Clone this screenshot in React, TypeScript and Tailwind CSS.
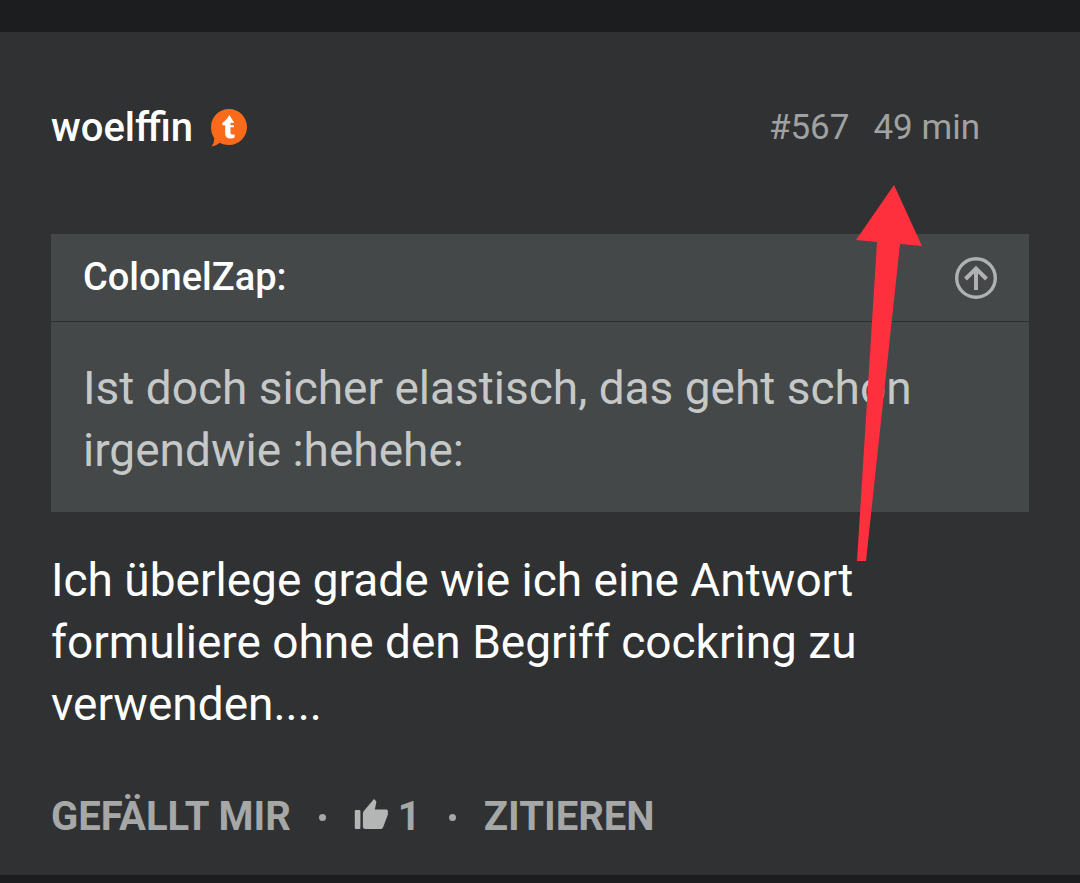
import React from 'react';

const TapatalkBadge = () => (
  <svg viewBox="0 0 36 38" className="h-[38px] w-9" role="img" aria-label="Tapatalk">
    <path
      d="M18 0C28 0 36 8 36 18S28 36 18 36C14.500 36 11.500 35.300 8.800 33.800C6.500 35.700 3.500 37 0.500 37.500C2.200 35.500 3.300 32.800 3.200 29C1.100 26 0 22 0 18C0 8 8 0 18 0Z"
      fill="#f96a1b"
    />
    <path
      d="M18.300 6L23.300 13.800H19.500V16.300H23V18.300H19.500V23.500C19.500 25 20.300 25.600 21.600 25.600H23.600V28.600C22.400 29.200 21.100 29.500 19.600 29.500C16 29.500 14.200 27.600 14.200 24.400V16.300H11.400V13.800C14 12.300 16.500 9.300 18.300 6Z"
      fill="#fff"
    />
  </svg>
);

const JumpIcon = () => (
  <svg viewBox="0 0 42 42" className="size-[42px]" fill="none" stroke="currentColor" aria-hidden="true">
    <circle cx="21" cy="21" r="19.300" strokeWidth="3.400" />
    <path d="M21 33V12M10.500 22L21 11.500L31.500 22" strokeWidth="4" />
  </svg>
);

const ThumbIcon = () => (
  <svg viewBox="0 0 34 32" className="mb-1.5 h-8 w-[34px] text-[#b4b6b6]" fill="currentColor" aria-hidden="true">
    <rect x="0.800" y="12" width="5.600" height="19" rx="1" />
    <path d="M9.800 13L20 1L21.800 2.800C22.300 3.300 22.500 3.900 22.300 4.600L20.800 11.500H32C33.200 11.500 33.900 12.200 33.900 13.200V16.500L29.200 29C28.700 30.400 27.700 31 26.200 31H11.500C9.700 31 8.900 30 8.900 28.500V15.500C8.900 14.500 9.200 13.700 9.800 13Z" />
  </svg>
);

const Dot = () => <span className="mx-7 size-[7px] rounded-full bg-[#a6a8a8]" />;

const Quote = () => (
  <blockquote className="mt-[78px] bg-[#444849]">
    <div className="flex h-[88px] items-center justify-between border-b border-[#2d2f30] px-8">
      <cite className="text-[38px] font-medium not-italic text-white">ColonelZap:</cite>
      <button type="button" aria-label="Zum Beitrag" className="text-[#b0b2b2]">
        <JumpIcon />
      </button>
    </div>
    <p className="px-8 pt-[35px] pb-[31px] text-[46px] leading-[62px] text-[#c6c8c8]">
      Ist doch sicher elastisch, das geht schon irgendwie :hehehe:
    </p>
  </blockquote>
);

export default function App() {
  return (
    <main className="min-h-screen bg-[#1c1d1f] pt-8 pb-2 font-[Roboto,sans-serif]">
      <article className="relative bg-[#303132] px-[51px] pt-[68px] pb-[30px]">
        <header className="flex h-14 items-center justify-between pr-[49px]">
          <div className="flex items-center gap-[18px]">
            <a href="#woelffin" className="text-[40px] font-medium text-white">woelffin</a>
            <TapatalkBadge />
          </div>
          <div className="flex gap-6 text-[35px] text-[#a0a2a2]">
            <a href="#567">#567</a>
            <time>49 min</time>
          </div>
        </header>

        <Quote />

        <p className="mt-[37px] text-[46px] leading-[62px] text-white">
          Ich überlege grade wie ich eine Antwort formuliere ohne den Begriff cockring zu verwenden....
        </p>

        <footer className="mt-[54px] flex h-14 items-center text-[40px] font-bold text-[#a6a8a8]">
          <button type="button">GEFÄLLT MIR</button>
          <Dot />
          <button type="button" aria-label="1 Like" className="flex items-center gap-2.5">
            <ThumbIcon />
            1
          </button>
          <Dot />
          <button type="button">ZITIEREN</button>
        </footer>

        {/* Marker arrow pointing at the post time */}
        <svg
          viewBox="0 0 66 376"
          className="pointer-events-none absolute top-[153px] right-[158px] h-[376px] w-[66px]"
          aria-hidden="true"
        >
          <path d="M38 0L66 61L44 59L10 376H1L21 57L0 55Z" fill="#ff303e" />
        </svg>
      </article>
    </main>
  );
}
